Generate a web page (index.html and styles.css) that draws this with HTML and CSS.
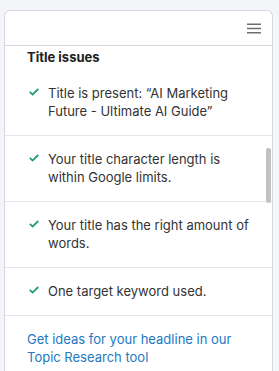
FILE: index.html
```html
<!DOCTYPE html>
<html>
<head>
<meta charset="utf-8">
<link rel="stylesheet" href="styles.css">
</head>
<body>
<div class="card">
  <div class="header">
    <svg class="menu" width="14" height="11" viewBox="0 0 14 11"><rect x="0" y="0.5" width="14" height="1.5" fill="#6b6f76"/><rect x="0" y="4.75" width="14" height="1.5" fill="#6b6f76"/><rect x="0" y="9" width="14" height="1.5" fill="#6b6f76"/></svg>
  </div>
  <div class="body">
    <div class="title">Title issues</div>
    <div class="item first">
      <svg class="check" width="10" height="8" viewBox="0 0 10 8"><polyline points="0.8,3.8 3.6,6.6 9.2,1" fill="none" stroke="#1f9d6f" stroke-width="1.8"/></svg>
      <div class="text">Title is present: “AI Marketing Future - Ultimate AI Guide”</div>
    </div>
    <div class="item">
      <svg class="check" width="10" height="8" viewBox="0 0 10 8"><polyline points="0.8,3.8 3.6,6.6 9.2,1" fill="none" stroke="#1f9d6f" stroke-width="1.8"/></svg>
      <div class="text">Your title character length is within Google limits.</div>
    </div>
    <div class="item">
      <svg class="check" width="10" height="8" viewBox="0 0 10 8"><polyline points="0.8,3.8 3.6,6.6 9.2,1" fill="none" stroke="#1f9d6f" stroke-width="1.8"/></svg>
      <div class="text">Your title has the right amount of words.</div>
    </div>
    <div class="item">
      <svg class="check" width="10" height="8" viewBox="0 0 10 8"><polyline points="0.8,3.8 3.6,6.6 9.2,1" fill="none" stroke="#1f9d6f" stroke-width="1.8"/></svg>
      <div class="text">One target keyword used.</div>
    </div>
    <div class="link-row">
      <a class="link" href="#">Get ideas for your headline in our Topic Research tool</a>
    </div>
    <div class="scrollbar"></div>
  </div>
</div>
</body>
</html>
```
FILE: styles.css
```css
html, body {
  margin: 0;
  padding: 0;
  background: #f4f5f9;
  overflow: hidden;
  height: 371px;
}
body {
  font-family: Inter, "Noto Sans", sans-serif;
  font-size: 13px;
  line-height: 18px;
  color: #333;
}
.card {
  margin: 10px 0 0 4px;
  width: 267px;
  height: 360px;
  background: #fff;
  border: 1px solid #d6d8dd;
  border-bottom: none;
  border-radius: 6px 6px 0 0;
  overflow: hidden;
}
.header {
  height: 34px;
  border-bottom: 1px solid #d6d8dd;
  display: flex;
  justify-content: flex-end;
  align-items: flex-start;
  padding-right: 11px;
}
.menu {
  margin-top: 12px;
}
.body {
  position: relative;
}
.title {
  font-weight: 700;
  color: #222;
  padding: 2px 22px 0 22px;
}
.item {
  display: flex;
  align-items: flex-start;
  gap: 9px;
  padding: 14px 16px 15px 24px;
  border-bottom: 1px solid #e4e6e9;
}
.item.first {
  padding-top: 18px;
}
.check {
  flex: none;
  margin-top: 4px;
}
.text {
  flex: 1;
}
.link-row {
  padding: 14px 16px 0 22px;
}
.link {
  color: #2278c3;
  text-decoration: none;
}
.scrollbar {
  position: absolute;
  left: 261px;
  top: 102px;
  width: 5px;
  height: 55px;
  border-radius: 3px;
  background: #c1c1c1;
}
```
